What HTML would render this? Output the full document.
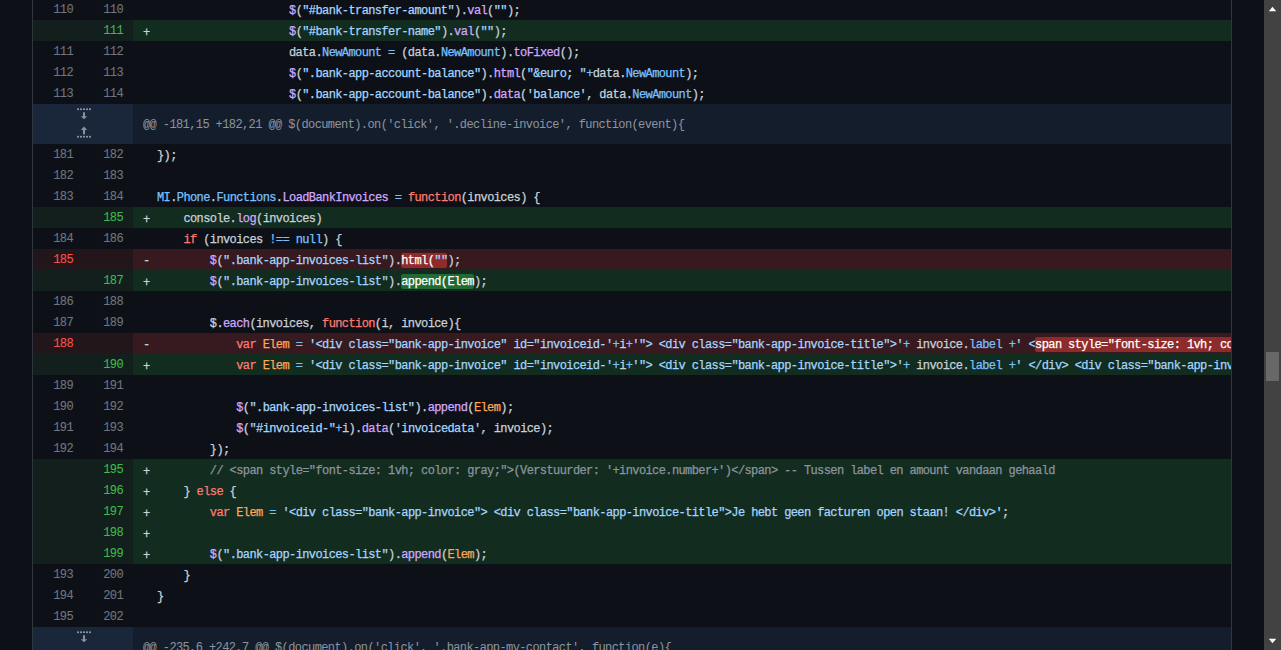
<!DOCTYPE html>
<html><head><meta charset="utf-8"><style>
*{box-sizing:border-box;margin:0;padding:0}
html,body{width:1281px;height:650px;overflow:hidden;background:#0d1117}
body{position:relative;font-family:"Liberation Mono",monospace;font-size:12px;letter-spacing:-0.6px;color:#c9d1d9;-webkit-text-stroke:0.25px}
#wrap{position:absolute;left:32px;top:-1px;width:1200px;height:700px;border-left:1px solid #30363d;border-right:1px solid #30363d;background:#0d1117}
.r{position:relative;height:21px;display:flex;white-space:pre;line-height:21px}
.r>div{padding-top:2px}
.r>.n{padding-top:1px;-webkit-text-stroke:0.1px}
.n{width:50px;flex:none;text-align:right;padding-right:10px;color:#6e7681}
.c{flex:1;overflow:hidden;padding-left:24px;position:relative}
.c .m{position:absolute;left:10px;top:2.5px;color:#c9d1d9}
.del .c .m{top:1.5px}
.add .n{background:#121f1c}
.add .n2{color:#3fb950}
.add .c{background:#132c20}
.del .n{background:#22161a}
.del .n1{color:#f85149}
.del .c{background:#371a1f}
.h{height:40px;display:flex;white-space:pre}
.h .e{width:100px;flex:none;background:#1a2639;position:relative}
.h .t{flex:1;background:#141d2b;color:#8b949e;line-height:40px;padding-left:10px;padding-top:1px;overflow:hidden;-webkit-text-stroke:0.05px}
.k{color:#ff7b72}.s{color:#a5d6ff}.f{color:#d2a8ff}.b{color:#79c0ff}.o{color:#ffa657}.cm{color:#8b949e}
.xd{background:#8e2b2b;color:#fff;border-radius:2px;padding-top:1px}
.xa{background:#1f6b33;color:#fff;border-radius:2px;padding-top:1px}
#sb{position:absolute;left:1264px;top:0;width:17px;height:650px;background:#424242}
#thumb{position:absolute;left:2px;top:352px;width:13px;height:29px;background:#686868}
</style></head>
<body><div id="wrap">
<div class="r"><div class="n n1">110</div><div class="n n2">110</div><div class="c">                    <span class="f">$</span>(<span class="s">"#bank-transfer-amount"</span>).<span class="f">val</span>(<span class="s">""</span>);</div></div>
<div class="r add"><div class="n n1"></div><div class="n n2">111</div><div class="c"><span class="m">+</span>                    <span class="f">$</span>(<span class="s">"#bank-transfer-name"</span>).<span class="f">val</span>(<span class="s">""</span>);</div></div>
<div class="r"><div class="n n1">111</div><div class="n n2">112</div><div class="c">                    data.<span class="b">NewAmount</span> <span class="b">=</span> (data.<span class="b">NewAmount</span>).<span class="f">toFixed</span>();</div></div>
<div class="r"><div class="n n1">112</div><div class="n n2">113</div><div class="c">                    <span class="f">$</span>(<span class="s">".bank-app-account-balance"</span>).<span class="f">html</span>(<span class="s">"&amp;euro; "</span><span class="b">+</span>data.<span class="b">NewAmount</span>);</div></div>
<div class="r"><div class="n n1">113</div><div class="n n2">114</div><div class="c">                    <span class="f">$</span>(<span class="s">".bank-app-account-balance"</span>).<span class="f">data</span>(<span class="s">'balance'</span>, data.<span class="b">NewAmount</span>);</div></div>
<div class="h"><div class="e"><svg width="100" height="40" style="position:absolute;left:0;top:0" fill="#8b949e"><rect x="44" y="4.3999999999999995" width="2" height="1.7"/><rect x="47" y="4.3999999999999995" width="2" height="1.7"/><rect x="50" y="4.3999999999999995" width="2" height="1.7"/><rect x="53" y="4.3999999999999995" width="2" height="1.7"/><rect x="56" y="4.3999999999999995" width="2" height="1.7"/><rect x="50" y="8.3" width="2" height="4.5"/><polygon points="47.8,12.3 54.2,12.3 51,15.3"/><polygon points="47.8,25.9 54.2,25.9 51,22.4"/><rect x="50" y="25.9" width="2" height="4.5"/><rect x="44" y="31.849999999999998" width="2" height="1.7"/><rect x="47" y="31.849999999999998" width="2" height="1.7"/><rect x="50" y="31.849999999999998" width="2" height="1.7"/><rect x="53" y="31.849999999999998" width="2" height="1.7"/><rect x="56" y="31.849999999999998" width="2" height="1.7"/></svg></div><div class="t">@@ -181,15 +182,21 @@ $(document).on('click', '.decline-invoice', function(event){</div></div>
<div class="r"><div class="n n1">181</div><div class="n n2">182</div><div class="c">});</div></div>
<div class="r"><div class="n n1">182</div><div class="n n2">183</div><div class="c"></div></div>
<div class="r"><div class="n n1">183</div><div class="n n2">184</div><div class="c"><span class="b">MI</span>.<span class="b">Phone</span>.<span class="b">Functions</span>.<span class="f">LoadBankInvoices</span> <span class="b">=</span> <span class="k">function</span>(invoices) {</div></div>
<div class="r add"><div class="n n1"></div><div class="n n2">185</div><div class="c"><span class="m">+</span>    console.<span class="f">log</span>(invoices)</div></div>
<div class="r"><div class="n n1">184</div><div class="n n2">186</div><div class="c">    <span class="k">if</span> (invoices <span class="b">!==</span> <span class="b">null</span>) {</div></div>
<div class="r del"><div class="n n1">185</div><div class="n n2"></div><div class="c"><span class="m">-</span>        <span class="f">$</span>(<span class="s">".bank-app-invoices-list"</span>).<span class="xd">html(<span class="s">""</span></span>);</div></div>
<div class="r add"><div class="n n1"></div><div class="n n2">187</div><div class="c"><span class="m">+</span>        <span class="f">$</span>(<span class="s">".bank-app-invoices-list"</span>).<span class="xa">append(Elem</span>);</div></div>
<div class="r"><div class="n n1">186</div><div class="n n2">188</div><div class="c"></div></div>
<div class="r"><div class="n n1">187</div><div class="n n2">189</div><div class="c">        $.<span class="f">each</span>(invoices, <span class="k">function</span>(i, invoice){</div></div>
<div class="r del"><div class="n n1">188</div><div class="n n2"></div><div class="c"><span class="m">-</span>            <span class="k">var</span> <span class="o">Elem</span> <span class="b">=</span> <span class="s">'&lt;div class="bank-app-invoice" id="invoiceid-'</span><span class="b">+</span>i<span class="b">+</span><span class="s">'"&gt; &lt;div class="bank-app-invoice-title"&gt;'</span><span class="b">+</span> invoice.<span class="b">label</span> <span class="b">+</span><span class="s">' &lt;</span><span class="xd">span style="font-size: 1vh; color: gray;"&gt;(Verstuurder: </span></div></div>
<div class="r add"><div class="n n1"></div><div class="n n2">190</div><div class="c"><span class="m">+</span>            <span class="k">var</span> <span class="o">Elem</span> <span class="b">=</span> <span class="s">'&lt;div class="bank-app-invoice" id="invoiceid-'</span><span class="b">+</span>i<span class="b">+</span><span class="s">'"&gt; &lt;div class="bank-app-invoice-title"&gt;'</span><span class="b">+</span> invoice.<span class="b">label</span> <span class="b">+</span><span class="s">' &lt;/div&gt; &lt;div class="bank-app-invoice-amount"&gt;</span></div></div>
<div class="r"><div class="n n1">189</div><div class="n n2">191</div><div class="c"></div></div>
<div class="r"><div class="n n1">190</div><div class="n n2">192</div><div class="c">            <span class="f">$</span>(<span class="s">".bank-app-invoices-list"</span>).<span class="f">append</span>(<span class="o">Elem</span>);</div></div>
<div class="r"><div class="n n1">191</div><div class="n n2">193</div><div class="c">            <span class="f">$</span>(<span class="s">"#invoiceid-"</span><span class="b">+</span>i).<span class="f">data</span>(<span class="s">'invoicedata'</span>, invoice);</div></div>
<div class="r"><div class="n n1">192</div><div class="n n2">194</div><div class="c">        });</div></div>
<div class="r add"><div class="n n1"></div><div class="n n2">195</div><div class="c"><span class="m">+</span>        <span class="cm">// &lt;span style="font-size: 1vh; color: gray;"&gt;(Verstuurder: '+invoice.number+')&lt;/span&gt; -- Tussen label en amount vandaan gehaald</span></div></div>
<div class="r add"><div class="n n1"></div><div class="n n2">196</div><div class="c"><span class="m">+</span>    } <span class="k">else</span> {</div></div>
<div class="r add"><div class="n n1"></div><div class="n n2">197</div><div class="c"><span class="m">+</span>        <span class="k">var</span> <span class="o">Elem</span> <span class="b">=</span> <span class="s">'&lt;div class="bank-app-invoice"&gt; &lt;div class="bank-app-invoice-title"&gt;Je hebt geen facturen open staan! &lt;/div&gt;'</span>;</div></div>
<div class="r add"><div class="n n1"></div><div class="n n2">198</div><div class="c"><span class="m">+</span></div></div>
<div class="r add"><div class="n n1"></div><div class="n n2">199</div><div class="c"><span class="m">+</span>        <span class="f">$</span>(<span class="s">".bank-app-invoices-list"</span>).<span class="f">append</span>(<span class="o">Elem</span>);</div></div>
<div class="r"><div class="n n1">193</div><div class="n n2">200</div><div class="c">    }</div></div>
<div class="r"><div class="n n1">194</div><div class="n n2">201</div><div class="c">}</div></div>
<div class="r"><div class="n n1">195</div><div class="n n2">202</div><div class="c"></div></div>
<div class="h"><div class="e"><svg width="100" height="40" style="position:absolute;left:0;top:0" fill="#8b949e"><rect x="44" y="4.3999999999999995" width="2" height="1.7"/><rect x="47" y="4.3999999999999995" width="2" height="1.7"/><rect x="50" y="4.3999999999999995" width="2" height="1.7"/><rect x="53" y="4.3999999999999995" width="2" height="1.7"/><rect x="56" y="4.3999999999999995" width="2" height="1.7"/><rect x="50" y="8.3" width="2" height="4.5"/><polygon points="47.8,12.3 54.2,12.3 51,15.3"/></svg></div><div class="t">@@ -235,6 +242,7 @@ $(document).on('click', '.bank-app-my-contact', function(e){</div></div>
</div>
<div id="sb"><svg width="17" height="650" style="position:absolute;left:0;top:0"><polygon points="4.8,11.3 12.2,11.3 8.5,6.8" fill="#fff"/><polygon points="4.8,638.7 12.2,638.7 8.5,643.2" fill="#fff"/></svg><div id="thumb"></div></div>
</body></html>
